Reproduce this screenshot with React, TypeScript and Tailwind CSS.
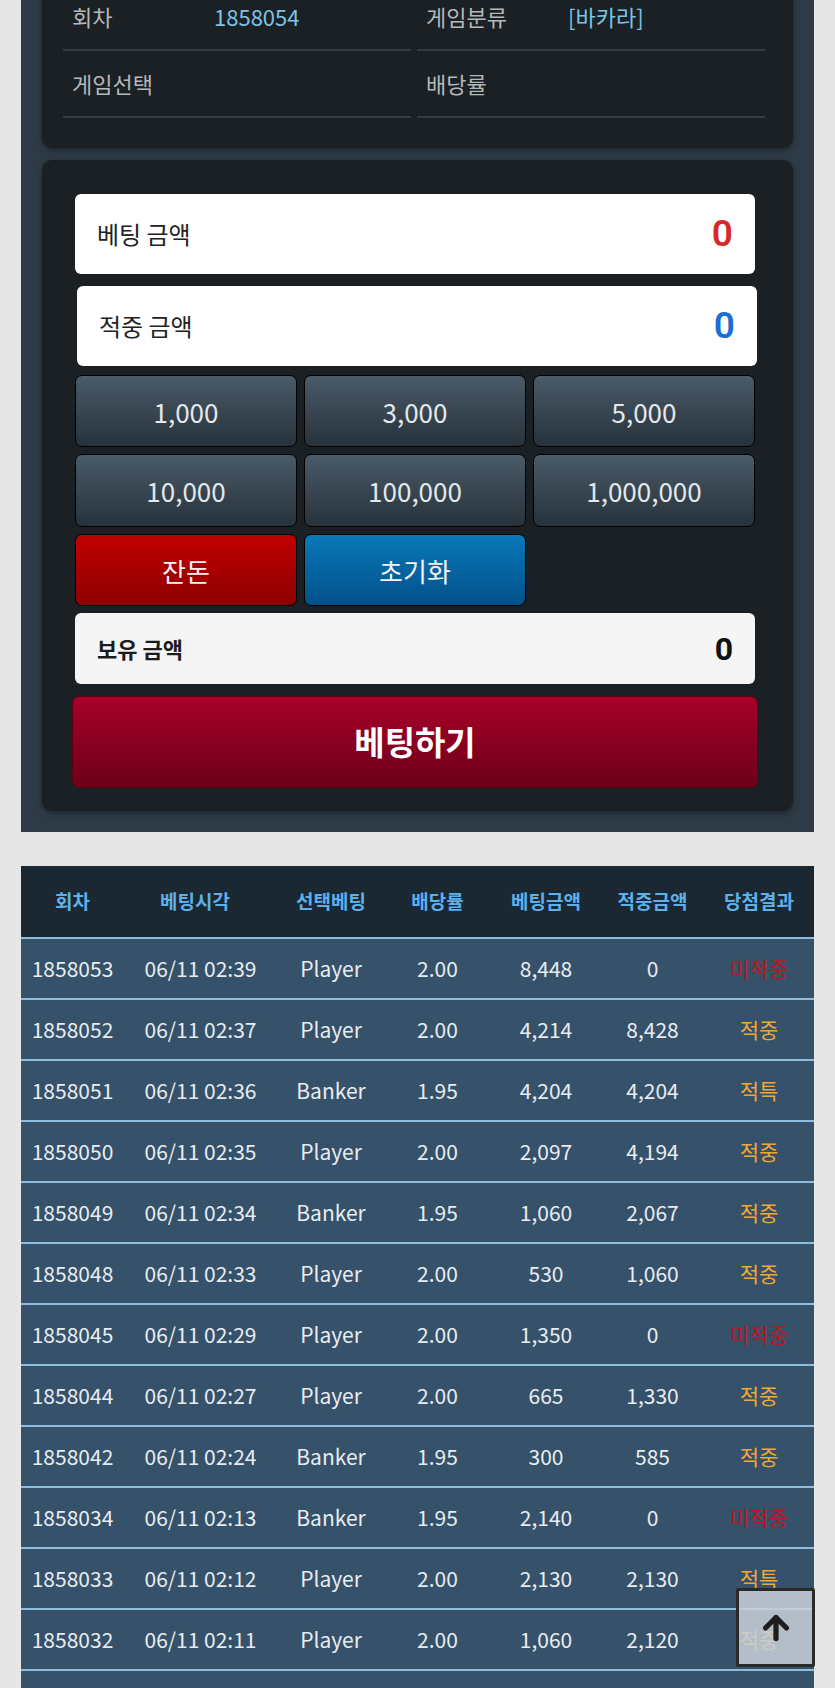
import { ArrowUp } from "lucide-react";

const rows = [
  ["1858053", "06/11 02:39", "Player", "2.00", "8,448", "0", "미적중"],
  ["1858052", "06/11 02:37", "Player", "2.00", "4,214", "8,428", "적중"],
  ["1858051", "06/11 02:36", "Banker", "1.95", "4,204", "4,204", "적특"],
  ["1858050", "06/11 02:35", "Player", "2.00", "2,097", "4,194", "적중"],
  ["1858049", "06/11 02:34", "Banker", "1.95", "1,060", "2,067", "적중"],
  ["1858048", "06/11 02:33", "Player", "2.00", "530", "1,060", "적중"],
  ["1858045", "06/11 02:29", "Player", "2.00", "1,350", "0", "미적중"],
  ["1858044", "06/11 02:27", "Player", "2.00", "665", "1,330", "적중"],
  ["1858042", "06/11 02:24", "Banker", "1.95", "300", "585", "적중"],
  ["1858034", "06/11 02:13", "Banker", "1.95", "2,140", "0", "미적중"],
  ["1858033", "06/11 02:12", "Player", "2.00", "2,130", "2,130", "적특"],
  ["1858032", "06/11 02:11", "Player", "2.00", "1,060", "2,120", "적중"],
];

const headers = ["회차", "베팅시각", "선택베팅", "배당률", "베팅금액", "적중금액", "당첨결과"];

const chips = ["1,000", "3,000", "5,000", "10,000", "100,000", "1,000,000"];

function InfoCell({ label, value }: { label: string; value?: string }) {
  return (
    <div className="flex h-[67px] items-center border-b-2 border-[#343c42] pl-[9px] text-[22px]">
      <span className="w-[142px] text-[#b4b8bb]">{label}</span>
      {value && <span className="text-[#7cc3e6]">{value}</span>}
    </div>
  );
}

export default function App() {
  return (
    <div className="min-h-screen bg-[#e6e6e6] px-[21px] pb-10 font-['Noto_Sans_CJK_KR','Noto_Sans',sans-serif]">
      {/* bet panel */}
      <div className="-mt-[37px] flex flex-col gap-[12px] bg-[#2e3b46] p-[21px] pb-[21px]">
        <div className="grid grid-cols-2 gap-x-[6px] rounded-[10px] bg-[#1b2024] pb-[30px] pl-[21px] pr-[28px] shadow-[0_2px_6px_rgba(0,0,0,0.4)]">
          <InfoCell label="회차" value="1858054" />
          <InfoCell label="게임분류" value="[바카라]" />
          <InfoCell label="게임선택" />
          <InfoCell label="배당률" />
        </div>

        <div className="flex flex-col rounded-[10px] bg-[#1b2024] pb-[23px] pl-[33px] pr-[38px] pt-[34px] shadow-[0_2px_6px_rgba(0,0,0,0.4)]">
          <div className="flex h-[80px] items-center justify-between rounded-[6px] bg-white px-[22px]">
            <span className="text-[24px] text-[#222]">베팅 금액</span>
            <span className="font-['Roboto',sans-serif] text-[37px] font-semibold text-[#d52a2a]">0</span>
          </div>
          <div className="ml-[2px] -mr-[2px] mt-[12px] flex h-[80px] items-center justify-between rounded-[6px] bg-white px-[22px]">
            <span className="text-[24px] text-[#222]">적중 금액</span>
            <span className="font-['Roboto',sans-serif] text-[37px] font-semibold text-[#1a6fd6]">0</span>
          </div>

          <div className="mt-[9px] grid grid-cols-3 gap-[7px]">
            {chips.map((c, i) => (
              <button
                key={c}
                className={`flex ${i < 3 ? "h-[72px]" : "h-[73px]"} items-center justify-center rounded-[7px] border border-black bg-gradient-to-b from-[#4a5b69] to-[#27323b] text-[26px] text-[#e4e8eb]`}
              >
                {c}
              </button>
            ))}
            <button className="flex h-[72px] items-center justify-center rounded-[7px] border border-black bg-gradient-to-b from-[#c20000] to-[#8c0000] text-[26px] text-[#f2f2f2]">
              잔돈
            </button>
            <button className="flex h-[72px] items-center justify-center rounded-[7px] border border-black bg-gradient-to-b from-[#0a79b8] to-[#03508a] text-[26px] text-[#f2f2f2]">
              초기화
            </button>
          </div>

          <div className="mt-[7px] flex h-[71px] items-center justify-between rounded-[6px] bg-[#f5f5f5] px-[22px]">
            <span className="text-[22px] font-bold text-[#1c1c1c]">보유 금액</span>
            <span className="font-['Roboto',sans-serif] text-[32px] font-bold text-[#111]">0</span>
          </div>

          <button className="-mx-[3px] mt-[12px] flex h-[92px] items-center justify-center rounded-[7px] border border-[#5a0010] bg-gradient-to-b from-[#a8002a] to-[#6c0018] text-[33px] font-bold text-white">
            베팅하기
          </button>
        </div>
      </div>

      {/* history table */}
      <div className="mt-[34px] bg-[#36516a]">
        <div className="grid h-[71px] grid-cols-[103px_153px_108px_105px_112px_101px_112px] items-center bg-[#1b2731] text-center text-[19px] font-bold text-[#5cb0ec]">
          {headers.map((h, i) => (
            <span key={h} className={i === 1 ? "pr-[11px]" : ""}>
              {h}
            </span>
          ))}
        </div>
        {rows.map((r) => (
          <div
            key={r[0]}
            className="grid h-[61px] grid-cols-[103px_153px_108px_105px_112px_101px_112px] items-center border-t-2 border-[#8dbddc] text-center text-[21px] text-[#e8edf1]"
          >
            {r.slice(0, 6).map((v, i) => (
              <span key={i}>{v}</span>
            ))}
            <span className={r[6] === "미적중" ? "text-[#c3121c]" : "text-[#f1a832]"}>{r[6]}</span>
          </div>
        ))}
        {/* next row, below the fold */}
        <div className="h-[61px] border-t-2 border-[#8dbddc]" />
      </div>

      {/* scroll to top */}
      <button className="fixed bottom-[21px] right-[20px] flex h-[79px] w-[79px] items-center justify-center rounded-[2px] border-[3px] border-[#2a2a2a] bg-[#c9d1d9]/85">
        <ArrowUp size={36} strokeWidth={3.5} className="text-[#1e1e1e]" />
      </button>
    </div>
  );
}
